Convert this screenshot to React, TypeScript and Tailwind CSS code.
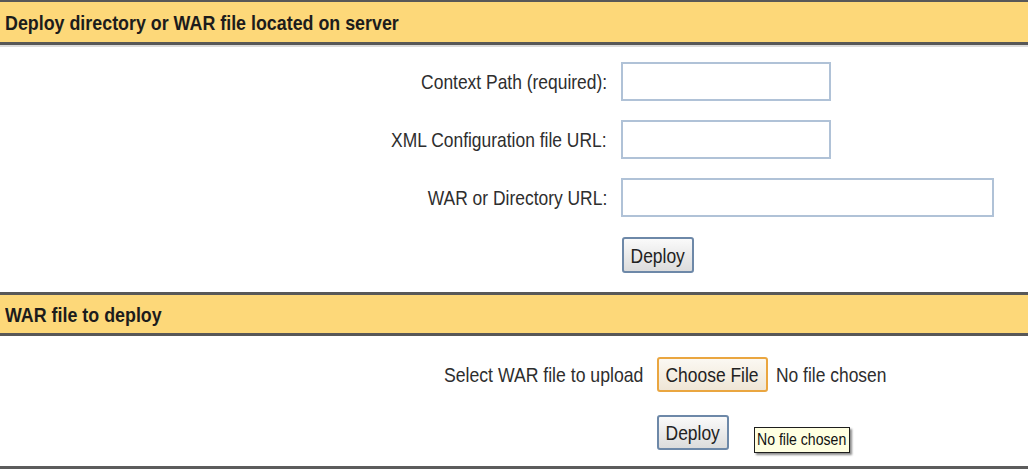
import React from "react";

const font = { fontFamily: '"Liberation Sans", Arial, sans-serif' };

// the screenshot uses a narrow face; squeeze Liberation Sans to match
const Narrow = ({ children, origin = "left" }: { children: React.ReactNode; origin?: "left" | "right" | "center" }) => (
  <span
    className={`inline-block whitespace-nowrap scale-x-[0.83] ${
      origin === "right" ? "origin-right" : origin === "center" ? "origin-center" : "origin-left"
    }`}
  >
    {children}
  </span>
);

const SectionHeader = ({ title, thinTop }: { title: string; thinTop?: boolean }) => (
  <div
    className={`border-b-[3px] border-[#585858] bg-[#fdd879] flex items-center pl-[5px] ${
      thinTop ? "border-t-2 h-[45px]" : "border-t-[3px] h-[44px]"
    }`}
  >
    <span className="inline-block whitespace-nowrap scale-x-[0.85] origin-left text-[21px] font-bold text-[#1c1c1c] leading-none">
      {title}
    </span>
  </div>
);

const FieldRow = ({ label, wide }: { label: string; wide?: boolean }) => (
  <div className="flex items-center h-[39px]">
    <label className="w-[607px] text-right text-[21px] text-[#2e2e2e] leading-none">
      <Narrow origin="right">{label}</Narrow>
    </label>
    <input
      type="text"
      className={`ml-[14px] h-[39px] border-2 border-[#b0c2d7] bg-white outline-none ${wide ? "w-[373px]" : "w-[210px]"}`}
    />
  </div>
);

const Button = ({ children, focused, width }: { children: React.ReactNode; focused?: boolean; width: string }) => (
  <button
    className={`flex items-center justify-center rounded-[3px] border-2 text-[21px] leading-none text-[#222] bg-gradient-to-b ${width} ${
      focused ? "border-[#eaa640] from-[#fbf8f2] to-[#efe6d6]" : "border-[#6d88a8] from-[#fafafa] to-[#dcdcdc]"
    }`}
    style={font}
  >
    <Narrow origin="center">{children}</Narrow>
  </button>
);

export default function App() {
  return (
    <div className="w-[1028px] h-[470px] bg-white relative overflow-hidden" style={font}>
      <SectionHeader title="Deploy directory or WAR file located on server" thinTop />
      <div className="h-[2px] bg-[#dcdcdc]" />
      <div className="flex flex-col gap-[19px] pt-[15px]">
        <FieldRow label="Context Path (required):" />
        <FieldRow label="XML Configuration file URL:" />
        <FieldRow label="WAR or Directory URL:" wide />
      </div>
      <div className="pl-[622px] pt-[20px] pb-[19px]">
        <Button width="w-[72px] h-[36px]">Deploy</Button>
      </div>
      <SectionHeader title="WAR file to deploy" />
      <div className="flex items-center pt-[21px]">
        <span className="w-[643px] text-right text-[21px] text-[#2e2e2e] leading-none">
          <span className="inline-block whitespace-nowrap scale-x-[0.84] origin-right">Select WAR file to upload</span>
        </span>
        <div className="ml-[14px]">
          <Button focused width="w-[111px] h-[35px]">Choose File</Button>
        </div>
        <span className="ml-[8px] text-[21px] text-[#2e2e2e] leading-none">
          <Narrow>No file chosen</Narrow>
        </span>
      </div>
      <div className="pl-[657px] pt-[23px] relative">
        <Button width="w-[72px] h-[35px]">Deploy</Button>
        <div className="absolute left-[754px] top-[35px] w-[96px] h-[26px] border border-[#1e1e1e] bg-[#ffffe1] pl-[2px] flex items-center text-[16px] text-[#111] leading-none shadow-[2px_2px_2px_rgba(0,0,0,0.45)]">
          <span className="inline-block whitespace-nowrap scale-x-[0.88] origin-left">No file chosen</span>
        </div>
      </div>
      <div className="absolute left-0 right-0 top-[466px] h-[3px] bg-[#5c5c5c]" />
    </div>
  );
}
